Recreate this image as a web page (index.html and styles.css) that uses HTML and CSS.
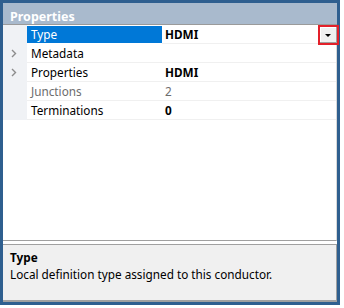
FILE: index.html
```html
<!DOCTYPE html>
<html>
<head>
<meta charset="utf-8">
<link rel="stylesheet" href="styles.css">
</head>
<body>
<div class="panel">
  <div class="header"><span class="header-title">Properties</span></div>
  <div class="grid">
    <div class="rows">
      <div class="row">
        <div class="gutter"></div>
        <div class="name selected">Type</div>
        <div class="value bold">HDMI<span class="dd"><span class="tri"></span></span></div>
      </div>
      <div class="row">
        <div class="gutter"><svg class="chev" width="6" height="9" viewBox="0 0 6 9"><polyline points="1,1 4.5,4.5 1,8" fill="none" stroke="#8c8c8c" stroke-width="1.4"/></svg></div>
        <div class="name">Metadata</div>
        <div class="value"></div>
      </div>
      <div class="row">
        <div class="gutter"><svg class="chev" width="6" height="9" viewBox="0 0 6 9"><polyline points="1,1 4.5,4.5 1,8" fill="none" stroke="#8c8c8c" stroke-width="1.4"/></svg></div>
        <div class="name">Properties</div>
        <div class="value bold">HDMI</div>
      </div>
      <div class="row">
        <div class="gutter"></div>
        <div class="name muted">Junctions</div>
        <div class="value muted">2</div>
      </div>
      <div class="row">
        <div class="gutter"></div>
        <div class="name">Terminations</div>
        <div class="value bold">0</div>
      </div>
    </div>
  </div>
  <div class="desc">
    <div class="desc-title">Type</div>
    <div class="desc-text">Local definition type assigned to this conductor.</div>
  </div>
</div>
</body>
</html>
```
FILE: styles.css
```css
html, body {
  margin: 0;
  padding: 0;
  background: #ffffff;
}
body {
  font-family: "Noto Sans", "Open Sans", sans-serif;
  font-size: 11.75px;
  color: #000;
}
.panel {
  width: 334px;
  height: 299px;
  border: 3px solid #2f5f8f;
  display: flex;
  flex-direction: column;
  background: #ffffff;
}
.header {
  height: 21px;
  background: #a9bacd;
  border-bottom: 1px solid #9a9a9a;
  position: relative;
  overflow: hidden;
}
.header-title {
  position: absolute;
  left: 7px;
  top: 6px;
  color: #ffffff;
  font-weight: bold;
  font-size: 12.5px;
  line-height: 16px;
}
.grid {
  height: 215px;
  border-right: 1px solid #d8d8d8;
  border-bottom: 1px solid #a0a0a0;
}
.rows {
  display: flex;
  flex-direction: column;
}
.row {
  display: flex;
  height: 19px;
  line-height: 19px;
}
.gutter {
  width: 24px;
  background: #f0f2f5;
  display: flex;
  align-items: center;
  padding-left: 8px;
  box-sizing: border-box;
}
.chev {
  display: block;
}
.name {
  width: 131px;
  padding-left: 4px;
  border-bottom: 1px solid #f0f0f0;
  white-space: nowrap;
  height: 18px;
}
.name.selected {
  background: #0078d7;
  color: #ffffff;
  border-top: 1px solid #ffffff;
  border-bottom: 1px solid #ffffff;
  height: 17px;
  line-height: 17px;
}
.value {
  flex: 1;
  padding-left: 3px;
  border-bottom: 1px solid #f0f0f0;
  position: relative;
  height: 18px;
}
.bold { font-weight: bold; }
.muted { color: #6d6d6d; }
.dd {
  position: absolute;
  right: -3px;
  top: 0px;
  width: 17px;
  height: 16px;
  border: 2px solid #e3202a;
  background: #f0f0f0;
  box-shadow: inset -1px -1px 0 #a0a0a0, inset 1px 1px 0 #ffffff;
}
.tri {
  position: absolute;
  left: 5px;
  top: 7px;
  width: 0;
  height: 0;
  border-left: 3px solid transparent;
  border-right: 3px solid transparent;
  border-top: 3px solid #000;
}
.desc {
  margin-top: 3px;
  flex: 1;
  background: #f0f0f0;
  border-top: 1px solid #a0a0a0;
  border-right: 1px solid #a0a0a0;
  border-bottom: 2px solid #a0a0a0;
  padding: 4px 0 0 7px;
}
.desc-title {
  font-weight: bold;
  line-height: 17px;
}
.desc-text {
  line-height: 17px;
}
```
